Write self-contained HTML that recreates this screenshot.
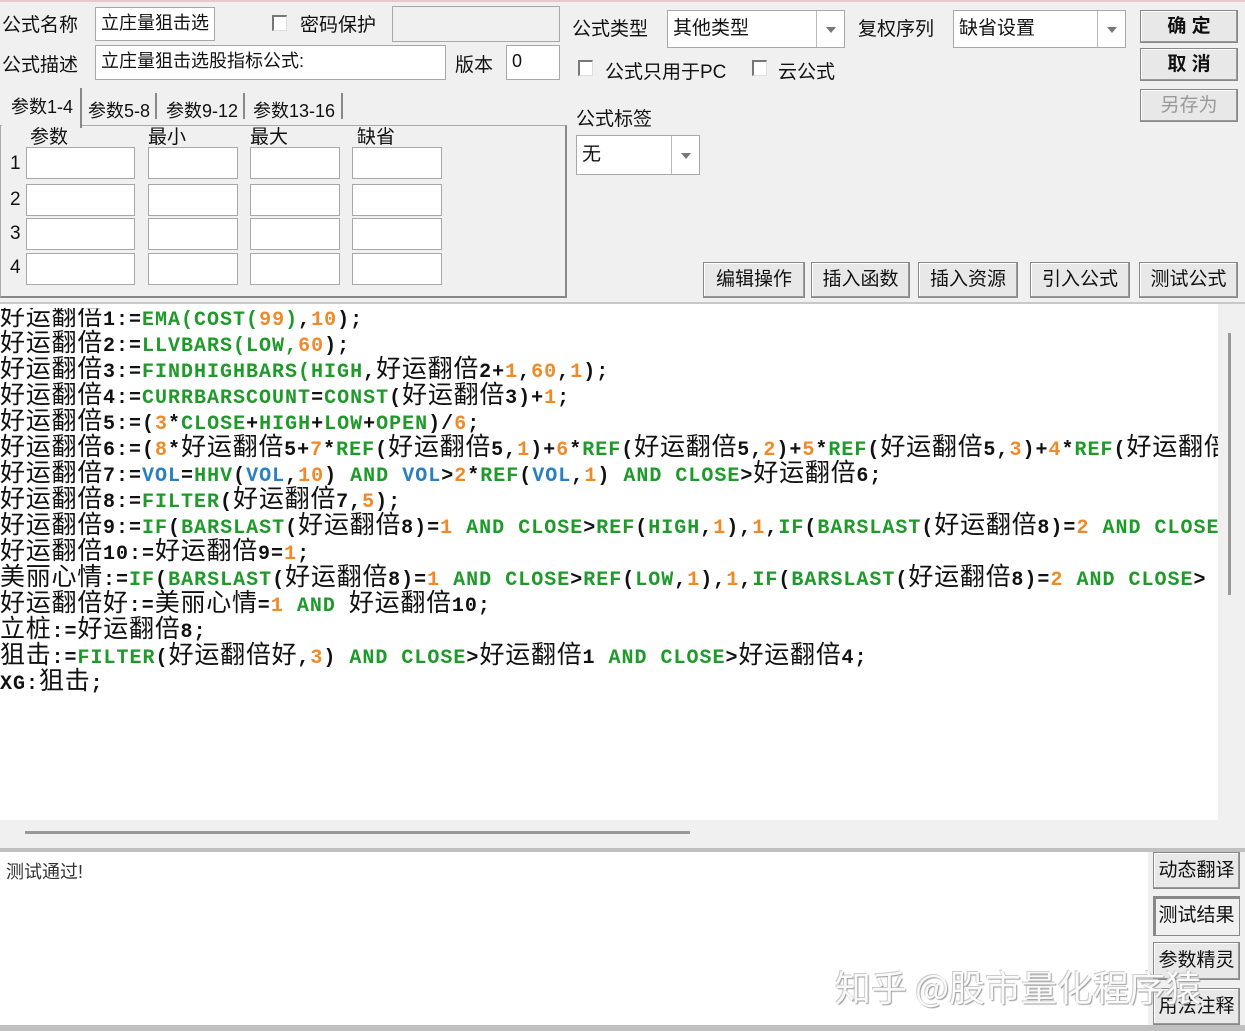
<!DOCTYPE html>
<html><head><meta charset="utf-8"><style>
*{margin:0;padding:0;box-sizing:border-box}
body{width:1245px;height:1031px;background:#f0f0f0;position:relative;overflow:hidden;font-family:"Liberation Sans","Noto Sans CJK SC",sans-serif;font-size:19px;color:#111}
.a{position:absolute;white-space:nowrap}
.in{position:absolute;background:#fff;border:1px solid #a8a8a8;padding-left:5px;line-height:30px;font-size:18px;white-space:nowrap;overflow:hidden}
.cb{position:absolute;width:15px;height:16px;background:#fff;border-left:2px solid #777;border-top:2px solid #777;border-right:1px solid #ddd;border-bottom:1px solid #ddd}
.btn{position:absolute;background:#e8e8e8;border:1px solid #888;box-shadow:inset -1px -1px 0 #999,inset 1px 1px 0 #fff;text-align:center;font-size:19px}
.sel{position:absolute;background:#fff;border:1px solid #a8a8a8;font-size:19px;padding-left:5px}
.sel .ar{position:absolute;right:0;top:0;bottom:0;width:28px;border-left:1px solid #bbb}
.sel .ar:after{content:"";position:absolute;left:9px;top:50%;margin-top:-2px;border:5px solid transparent;border-top:6px solid #777}
.code{position:absolute;left:0;top:308px;width:1218px;height:512px;overflow:hidden;font-family:"Liberation Mono",monospace;font-weight:bold;font-size:20px;letter-spacing:1px;color:#111}
.code div{height:26px;line-height:26px;white-space:pre}
.code i{font-style:normal;font-family:"WenQuanYi Zen Hei","Noto Sans CJK SC",sans-serif;font-weight:normal;font-size:25px;letter-spacing:0.75px;line-height:0}
.g{color:#1f9a2a}.o{color:#f08a28}.b{color:#2a7fc0}
.tab{position:absolute;top:97px;font-size:18px}
</style></head><body>
<div class="a" style="left:0;top:0;width:1245px;height:2px;background:#e8c8c8"></div>
<div class="a" style="left:2px;top:10px">公式名称</div>
<div class="in" style="left:95px;top:7px;width:120px;height:34px">立庄量狙击选</div>
<div class="cb" style="left:272px;top:15px"></div>
<div class="a" style="left:300px;top:10px">密码保护</div>
<div class="a" style="left:392px;top:6px;width:168px;height:36px;border:1px solid #a8a8a8;background:#f0f0f0"></div>
<div class="a" style="left:2px;top:50px">公式描述</div>
<div class="in" style="left:95px;top:45px;width:351px;height:35px">立庄量狙击选股指标公式:</div>
<div class="a" style="left:455px;top:50px">版本</div>
<div class="in" style="left:506px;top:45px;width:54px;height:35px">0</div>

<div class="a" style="left:572px;top:14px">公式类型</div>
<div class="sel" style="left:667px;top:10px;width:178px;height:38px;line-height:36px">其他类型<div class="ar"></div></div>
<div class="a" style="left:858px;top:14px">复权序列</div>
<div class="sel" style="left:953px;top:10px;width:173px;height:38px;line-height:36px">缺省设置<div class="ar"></div></div>
<div class="btn" style="left:1140px;top:10px;width:98px;height:33px;line-height:31px;font-weight:bold">确 定</div>
<div class="btn" style="left:1140px;top:48px;width:98px;height:33px;line-height:31px;font-weight:bold">取 消</div>
<div class="btn" style="left:1140px;top:89px;width:98px;height:33px;line-height:31px;color:#999">另存为</div>
<div class="cb" style="left:578px;top:60px"></div>
<div class="a" style="left:605px;top:57px">公式只用于PC</div>
<div class="cb" style="left:752px;top:60px"></div>
<div class="a" style="left:778px;top:57px">云公式</div>
<div class="a" style="left:576px;top:104px">公式标签</div>
<div class="sel" style="left:576px;top:135px;width:124px;height:40px;line-height:38px">无<div class="ar"></div></div>

<div class="a" style="left:0;top:125px;width:567px;height:173px;border:1px solid #aaa;border-right:2px solid #888;border-bottom:2px solid #888"></div>
<div class="a" style="left:2px;top:88px;width:80px;height:40px;background:#f0f0f0;border-right:2px solid #888;padding:5px 0 0 9px;font-size:18px">参数1-4</div>
<div class="tab" style="left:88px">参数5-8</div>
<div class="a" style="left:155px;top:93px;width:2px;height:26px;background:#888"></div>
<div class="tab" style="left:166px">参数9-12</div>
<div class="a" style="left:243px;top:93px;width:2px;height:26px;background:#888"></div>
<div class="tab" style="left:253px">参数13-16</div>
<div class="a" style="left:341px;top:93px;width:2px;height:26px;background:#888"></div>
<div class="a" style="left:30px;top:122px">参数</div>
<div class="a" style="left:148px;top:122px">最小</div>
<div class="a" style="left:250px;top:122px">最大</div>
<div class="a" style="left:357px;top:122px">缺省</div>
<div class="a" style="left:10px;top:153px">1</div><div class="a" style="left:10px;top:189px">2</div><div class="a" style="left:10px;top:223px">3</div><div class="a" style="left:10px;top:257px">4</div>
<div class="in" style="left:26px;top:147px;width:109px;height:32px"></div><div class="in" style="left:148px;top:147px;width:90px;height:32px"></div><div class="in" style="left:250px;top:147px;width:90px;height:32px"></div><div class="in" style="left:352px;top:147px;width:90px;height:32px"></div>
<div class="in" style="left:26px;top:184px;width:109px;height:32px"></div><div class="in" style="left:148px;top:184px;width:90px;height:32px"></div><div class="in" style="left:250px;top:184px;width:90px;height:32px"></div><div class="in" style="left:352px;top:184px;width:90px;height:32px"></div>
<div class="in" style="left:26px;top:218px;width:109px;height:32px"></div><div class="in" style="left:148px;top:218px;width:90px;height:32px"></div><div class="in" style="left:250px;top:218px;width:90px;height:32px"></div><div class="in" style="left:352px;top:218px;width:90px;height:32px"></div>
<div class="in" style="left:26px;top:253px;width:109px;height:32px"></div><div class="in" style="left:148px;top:253px;width:90px;height:32px"></div><div class="in" style="left:250px;top:253px;width:90px;height:32px"></div><div class="in" style="left:352px;top:253px;width:90px;height:32px"></div>

<div class="btn" style="left:703px;top:262px;width:102px;height:36px;line-height:34px">编辑操作</div>
<div class="btn" style="left:811px;top:262px;width:99px;height:36px;line-height:34px">插入函数</div>
<div class="btn" style="left:918px;top:262px;width:100px;height:36px;line-height:34px">插入资源</div>
<div class="btn" style="left:1030px;top:262px;width:100px;height:36px;line-height:34px">引入公式</div>
<div class="btn" style="left:1139px;top:262px;width:99px;height:36px;line-height:34px">测试公式</div>

<div class="a" style="left:0;top:302px;width:1245px;height:2px;background:#c8c8c8"></div>
<div class="a" style="left:0;top:304px;width:1218px;height:516px;background:#fff"></div>
<div class="a" style="left:0;top:820px;width:1245px;height:28px;background:#f0f0f0"></div>
<div class="a" style="left:25px;top:831px;width:665px;height:3px;background:#999"></div>
<div class="a" style="left:0;top:848px;width:1245px;height:4px;background:#c0c0c0"></div>
<div class="code"><div><i>好运翻倍</i>1:=<span class="g">EMA(COST(</span><span class="o">99</span><span class="g">)</span>,<span class="o">10</span>);</div><div><i>好运翻倍</i>2:=<span class="g">LLVBARS(LOW,</span><span class="o">60</span>);</div><div><i>好运翻倍</i>3:=<span class="g">FINDHIGHBARS(HIGH</span>,<i>好运翻倍</i>2+<span class="o">1</span>,<span class="o">60</span>,<span class="o">1</span>);</div><div><i>好运翻倍</i>4:=<span class="g">CURRBARSCOUNT</span>=<span class="g">CONST</span>(<i>好运翻倍</i>3)+<span class="o">1</span>;</div><div><i>好运翻倍</i>5:=(<span class="o">3</span>*<span class="g">CLOSE</span>+<span class="g">HIGH</span>+<span class="g">LOW</span>+<span class="g">OPEN</span>)/<span class="o">6</span>;</div><div><i>好运翻倍</i>6:=(<span class="o">8</span>*<i>好运翻倍</i>5+<span class="o">7</span>*<span class="g">REF</span>(<i>好运翻倍</i>5,<span class="o">1</span>)+<span class="o">6</span>*<span class="g">REF</span>(<i>好运翻倍</i>5,<span class="o">2</span>)+<span class="o">5</span>*<span class="g">REF</span>(<i>好运翻倍</i>5,<span class="o">3</span>)+<span class="o">4</span>*<span class="g">REF</span>(<i>好运翻倍</i></div><div><i>好运翻倍</i>7:=<span class="b">VOL</span>=<span class="g">HHV</span>(<span class="b">VOL</span>,<span class="o">10</span>) <span class="g">AND</span> <span class="b">VOL</span>&gt;<span class="o">2</span>*<span class="g">REF</span>(<span class="b">VOL</span>,<span class="o">1</span>) <span class="g">AND</span> <span class="g">CLOSE</span>&gt;<i>好运翻倍</i>6;</div><div><i>好运翻倍</i>8:=<span class="g">FILTER</span>(<i>好运翻倍</i>7,<span class="o">5</span>);</div><div><i>好运翻倍</i>9:=<span class="g">IF</span>(<span class="g">BARSLAST</span>(<i>好运翻倍</i>8)=<span class="o">1</span> <span class="g">AND</span> <span class="g">CLOSE</span>&gt;<span class="g">REF</span>(<span class="g">HIGH</span>,<span class="o">1</span>),<span class="o">1</span>,<span class="g">IF</span>(<span class="g">BARSLAST</span>(<i>好运翻倍</i>8)=<span class="o">2</span> <span class="g">AND</span> <span class="g">CLOSE</span></div><div><i>好运翻倍</i>10:=<i>好运翻倍</i>9=<span class="o">1</span>;</div><div><i>美丽心情</i>:=<span class="g">IF</span>(<span class="g">BARSLAST</span>(<i>好运翻倍</i>8)=<span class="o">1</span> <span class="g">AND</span> <span class="g">CLOSE</span>&gt;<span class="g">REF</span>(<span class="g">LOW</span>,<span class="o">1</span>),<span class="o">1</span>,<span class="g">IF</span>(<span class="g">BARSLAST</span>(<i>好运翻倍</i>8)=<span class="o">2</span> <span class="g">AND</span> <span class="g">CLOSE</span>&gt;</div><div><i>好运翻倍好</i>:=<i>美丽心情</i>=<span class="o">1</span> <span class="g">AND</span> <i>好运翻倍</i>10;</div><div><i>立桩</i>:=<i>好运翻倍</i>8;</div><div><i>狙击</i>:=<span class="g">FILTER</span>(<i>好运翻倍好</i>,<span class="o">3</span>) <span class="g">AND</span> <span class="g">CLOSE</span>&gt;<i>好运翻倍</i>1 <span class="g">AND</span> <span class="g">CLOSE</span>&gt;<i>好运翻倍</i>4;</div><div>XG:<i>狙击</i>;</div></div>
<div class="a" style="left:1218px;top:304px;width:27px;height:516px;background:#f0f0f0"></div>
<div class="a" style="left:1228px;top:333px;width:3px;height:262px;background:#999"></div>

<div class="a" style="left:0;top:852px;width:1148px;height:173px;background:#fff"></div>
<div class="a" style="left:6px;top:858px;font-size:18px;color:#333">测试通过!</div>
<div class="a" style="left:0;top:1025px;width:1245px;height:6px;background:#c0c0c0"></div>
<div class="btn" style="left:1153px;top:852px;width:87px;height:37px;line-height:35px">动态翻译</div>
<div class="btn" style="left:1153px;top:896px;width:87px;height:40px;line-height:38px;box-shadow:inset 2px 2px 0 #888;background:#f0f0f0">测试结果</div>
<div class="btn" style="left:1153px;top:942px;width:87px;height:38px;line-height:36px">参数精灵</div>
<div class="btn" style="left:1153px;top:988px;width:87px;height:37px;line-height:35px">用法注释</div>
<div class="a" style="left:835px;top:960px;font-size:36px;color:#fafafa;text-shadow:1px 1px 1px #999,-1px -1px 0 #ccc;font-family:'Noto Sans CJK SC',sans-serif">知乎 @股市量化程序猿</div>
</body></html>
